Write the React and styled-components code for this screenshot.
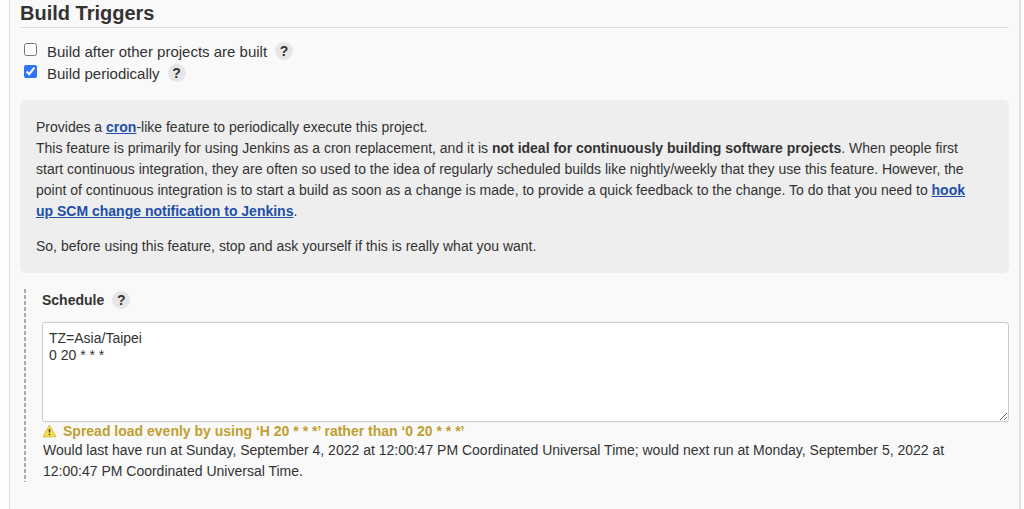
import React from "react";
import styled, { createGlobalStyle } from "styled-components";

const GlobalStyle = createGlobalStyle`
  * {
    box-sizing: border-box;
  }
  html {
    background: #fdfdfd;
  }
  body {
    margin: 0;
    color: #333;
    font-family: "Liberation Sans", Arial, sans-serif;
    font-size: 14px;
    line-height: 21px;
  }
  h2, p {
    margin: 0;
  }
`;

const Panel = styled.main`
  min-height: 100vh;
  margin: 0 3px 0 9px;
  padding: 0 10px 24px;
  border: solid #dde3e5;
  border-width: 0 2px 0 1px;
  background: #f9f9f9;
`;

const SectionTitle = styled.h2`
  padding-top: 1px;
  padding-bottom: 1px;
  border-bottom: 1px solid #dedede;
  font-size: 20px;
  line-height: 25px;
`;

const Options = styled.div`
  padding: 12px 0 16px 4px;
`;

const Option = styled.div`
  display: flex;
  align-items: center;
  height: 22px;
  font-size: 15px;
`;

const Checkbox = styled.input`
  width: 13px;
  height: 13px;
  margin: 0 10px 3px 0;
  accent-color: #2f73f6;
`;

const HelpButton = styled.button`
  width: 18px;
  height: 18px;
  margin-left: 8px;
  padding: 0;
  border: 0;
  border-radius: 50%;
  background: #e6e6e6;
  color: #333;
  font: bold 14px/18px "Liberation Sans", Arial, sans-serif;
  text-align: center;
`;

const HelpBox = styled.section`
  padding: 17px 28px 16px 16px;
  border-radius: 6px;
  background: #eee;
`;

const Closing = styled.p`
  padding-top: 14px;
`;

const HelpLink = styled.a`
  color: #204ea8;
  font-weight: bold;
`;

const ScheduleBlock = styled.div`
  margin: 16px 0 0 4px;
  padding-left: 18px;
  background: repeating-linear-gradient(#aaa 0 4px, transparent 4px 6px) left /
    2px 100% no-repeat;
`;

const ScheduleHeader = styled.div`
  display: flex;
  align-items: center;
  height: 22px;
  margin-bottom: 11px;
  font-weight: bold;
`;

const ScheduleInput = styled.textarea`
  display: block;
  width: 100%;
  height: 100px;
  padding: 7px 6px;
  border: 1px solid #c3cbd0;
  border-radius: 3px;
  background: #fff;
  color: #333;
  font: 14px/17px "Liberation Sans", Arial, sans-serif;
  resize: vertical;
`;

const Warning = styled.div`
  display: flex;
  align-items: center;
  gap: 6px;
  height: 18px;
  color: #bf9f30;
  font-weight: bold;
`;

const NextRun = styled.p`
  padding: 0 16px 0 1px;
`;

const Help = ({ topic }) => (
  <HelpButton type="button" aria-label={`Help for ${topic}`}>
    ?
  </HelpButton>
);

const WarningIcon = () => (
  <svg width="15" height="14" viewBox="0 0 15 14" aria-hidden="true">
    <path
      d="M7.5 1.2 14 12.8H1Z"
      fill="#f6e04b"
      stroke="#d3bd45"
      strokeWidth="1"
      strokeLinejoin="round"
    />
    <path d="M7.5 5v3.6M7.5 9.8v1.4" stroke="#4b4420" strokeWidth="1.5" />
  </svg>
);

const App = () => {
  return (
    <>
      <GlobalStyle />
      <Panel>
        <SectionTitle>Build Triggers</SectionTitle>
        <Options>
          <Option>
            <Checkbox type="checkbox" id="after" />
            <label htmlFor="after">Build after other projects are built</label>
            <Help topic="Build after other projects are built" />
          </Option>
          <Option>
            <Checkbox type="checkbox" id="periodic" defaultChecked />
            <label htmlFor="periodic">Build periodically</label>
            <Help topic="Build periodically" />
          </Option>
        </Options>
        <HelpBox>
          <p>
            Provides a <HelpLink href="#cron">cron</HelpLink>-like feature to
            periodically execute this project.
          </p>
          <p>
            This feature is primarily for using Jenkins as a cron replacement,
            and it is{" "}
            <b>not ideal for continuously building software projects</b>. When
            people first start continuous integration, they are often so used to
            the idea of regularly scheduled builds like nightly/weekly that they
            use this feature. However, the point of continuous integration is to
            start a build as soon as a change is made, to provide a quick
            feedback to the change. To do that you need to{" "}
            <HelpLink href="#scm">
              hook up SCM change notification to Jenkins
            </HelpLink>
            .
          </p>
          <Closing>
            So, before using this feature, stop and ask yourself if this is
            really what you want.
          </Closing>
        </HelpBox>
        <ScheduleBlock>
          <ScheduleHeader>
            <label htmlFor="schedule">Schedule</label>
            <Help topic="Schedule" />
          </ScheduleHeader>
          <ScheduleInput
            id="schedule"
            spellCheck="false"
            defaultValue={"TZ=Asia/Taipei\n0 20 * * *"}
          />
          <Warning>
            <WarningIcon />
            Spread load evenly by using ‘H 20 * * *’ rather than ‘0 20 * * *’
          </Warning>
          <NextRun>
            Would last have run at Sunday, September 4, 2022 at 12:00:47 PM
            Coordinated Universal Time; would next run at Monday, September 5,
            2022 at 12:00:47 PM Coordinated Universal Time.
          </NextRun>
        </ScheduleBlock>
      </Panel>
    </>
  );
};

export default App;
